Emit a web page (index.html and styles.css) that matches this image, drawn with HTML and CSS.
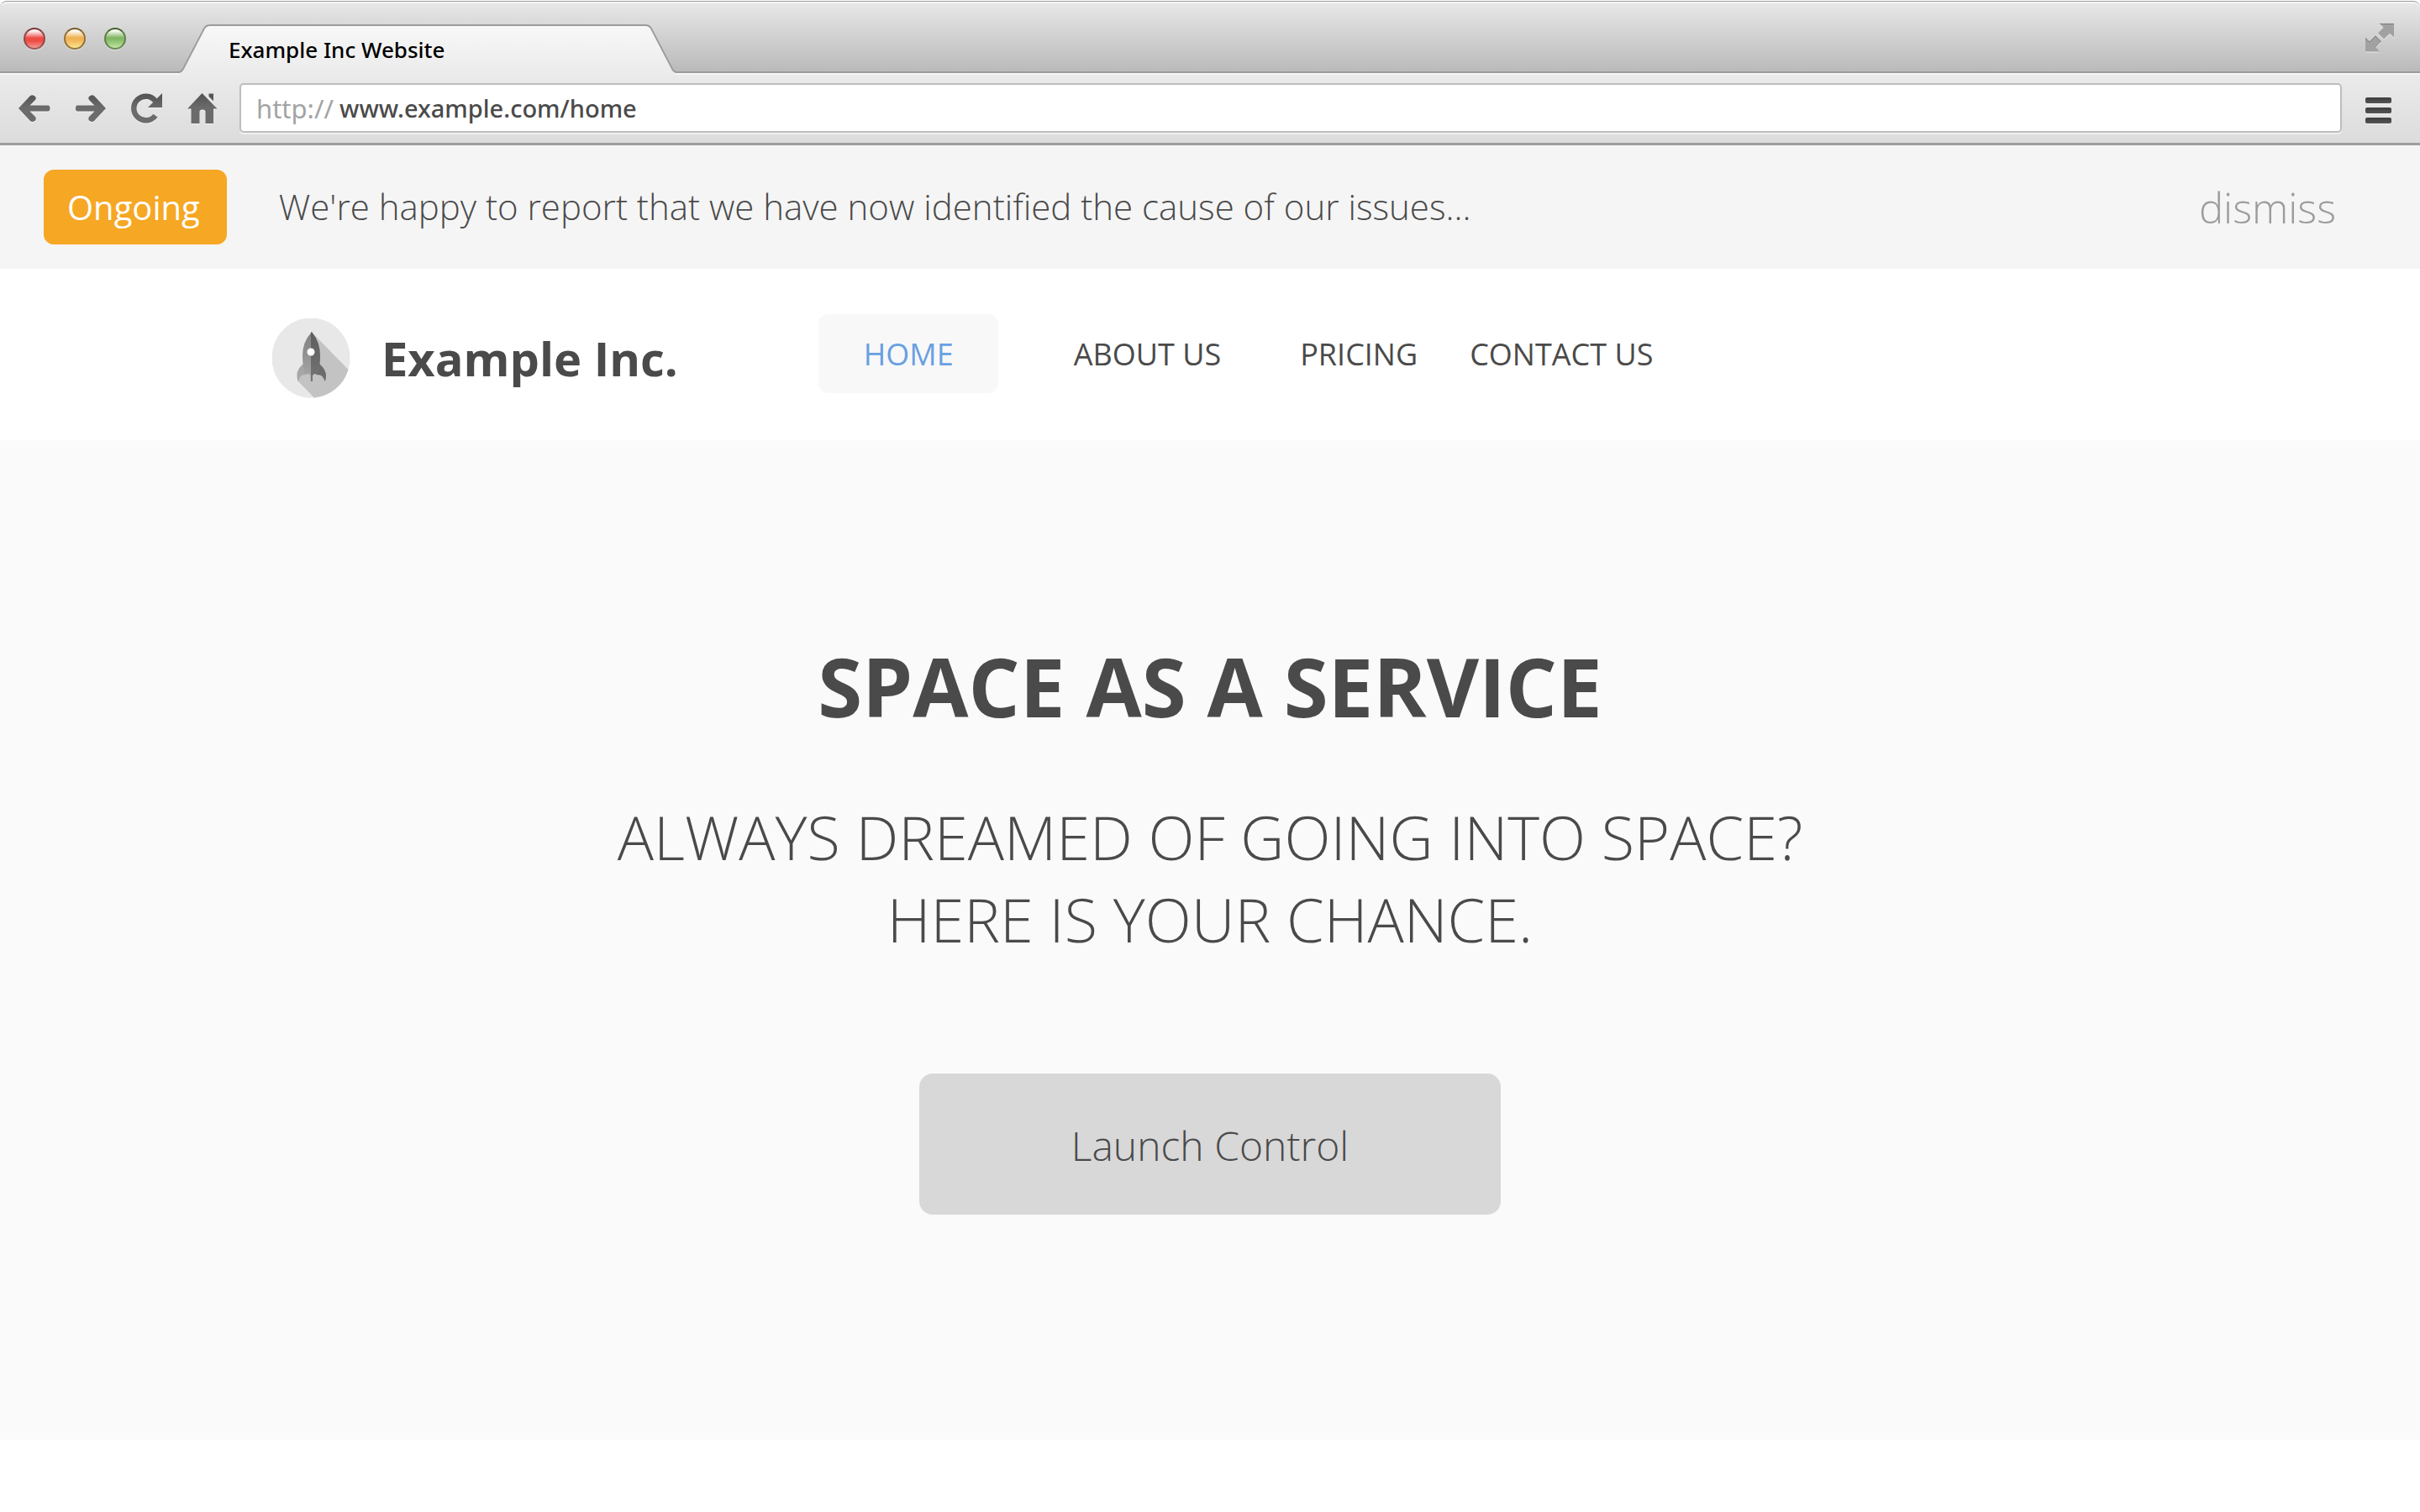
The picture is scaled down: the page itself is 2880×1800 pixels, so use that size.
FILE: index.html
```html
<!DOCTYPE html>
<html lang="en">
<head>
<meta charset="utf-8">
<meta name="viewport" content="width=device-width, initial-scale=1">
<title>Example Inc Website</title>
<link rel="stylesheet" href="styles.css">
</head>
<body>
<svg class="defs" width="0" height="0" aria-hidden="true">
  <defs>
    <linearGradient id="ink" x1="0" y1="0" x2="0" y2="37" gradientUnits="userSpaceOnUse">
      <stop offset="0" stop-color="#505050"/><stop offset=".5" stop-color="#6b6b6b"/><stop offset="1" stop-color="#6b6b6b"/>
    </linearGradient>
    <linearGradient id="tabfill" x1="0" y1="0" x2="0" y2="1">
      <stop offset="0" stop-color="#f8f8f8"/><stop offset="1" stop-color="#ebebeb"/>
    </linearGradient>
    <linearGradient id="hull-left" x1="0" y1="0" x2="0" y2="1">
      <stop offset="0" stop-color="#808080"/><stop offset="1" stop-color="#a8a8a8"/>
    </linearGradient>
    <linearGradient id="hull-right" x1="0" y1="0" x2="0" y2="1">
      <stop offset="0" stop-color="#5c5c5c"/><stop offset="1" stop-color="#757575"/>
    </linearGradient>
  </defs>
</svg>

<div class="browser">
  <div class="titlebar">
    <div class="lights">
      <button class="light light-close" type="button" aria-label="Close"></button>
      <button class="light light-minimise" type="button" aria-label="Minimise"></button>
      <button class="light light-zoom" type="button" aria-label="Zoom"></button>
    </div>
    <div class="tab">
      <svg class="tab-shape" viewBox="0 0 594 60" aria-hidden="true">
        <path d="M2 60V57Q5 57 6 53L31 5Q33 1 38 1H556Q561 1 563 5L588 53Q589 57 592 57V60Z" fill="url(#tabfill)"/>
        <path d="M0 57Q4 57 6 53L31 5Q33 1 38 1H556Q561 1 563 5L588 53Q590 57 594 57" fill="none" stroke="#9b9b9b" stroke-width="1.8"/>
      </svg>
      <span class="tab-title">Example Inc Website</span>
    </div>
    <button class="icon-button fullscreen" type="button" aria-label="Full screen">
      <svg width="34" height="34" viewBox="0 0 34 34" aria-hidden="true">
        <path d="M17 0H34V16.500L29 12L22 18.500L15 11.500L21.500 5Z M17 33.500H0V17L5 21.500L12 14.500L19 21.500L12.500 28.500Z" fill="#a1a1a1"/>
        <path d="M17 .5H34M0 17.500L5 22L12 15L18.500 21.500" fill="none" stroke="#7c7c7c"/>
      </svg>
    </button>
  </div>
  <div class="toolbar">
    <div class="controls">
      <button class="icon-button" type="button" aria-label="Back">
        <svg width="37" height="37" viewBox="0 0 37 37" aria-hidden="true"><path fill="url(#ink)" d="M0 19L14 4Q17 2 20 5Q21.500 7 20 9L13.500 15.500H35Q37.500 15.500 37.500 19T35 22.500H13.500L20 29Q21.500 31.500 20 33.500Q17 36 14 34Z"/></svg>
      </button>
      <button class="icon-button" type="button" aria-label="Forward">
        <svg width="37" height="37" viewBox="0 0 37 37" aria-hidden="true"><path fill="url(#ink)" d="M37 19L23 4Q20 2 17 5Q15.500 7 17 9L23.500 15.500H3Q1 15.500 1 19T3 22.500H23.500L17 29Q15.500 31.500 17 33.500Q20 36 23 34Z"/></svg>
      </button>
      <button class="icon-button" type="button" aria-label="Reload">
        <svg width="37" height="37" viewBox="0 0 37 37" aria-hidden="true"><path fill="none" stroke="url(#ink)" stroke-width="6.500" d="M29 27.600A14.300 14.300 0 1 1 28.700 10"/><path fill="url(#ink)" d="M37 1V18H20Z"/></svg>
      </button>
      <button class="icon-button" type="button" aria-label="Home">
        <svg width="37" height="37" viewBox="0 0 37 37" aria-hidden="true"><path fill="url(#ink)" d="M0 19.500L17.500 1L35.500 19.500H31V37H21.500V23Q21.500 20.500 18 20.500T14.500 23V37H4.500V19.500ZM25.500 1.500H31V10.500L25.500 5Z"/></svg>
      </button>
    </div>
    <div class="address">
      <label class="scheme" for="url">http://</label>
      <input class="url" id="url" type="text" value="www.example.com/home">
    </div>
    <button class="icon-button menu" type="button" aria-label="Menu">
      <span class="bar"></span><span class="bar"></span><span class="bar"></span>
    </button>
  </div>
</div>

<section class="notice">
  <span class="badge">Ongoing</span>
  <p class="notice-text">We're happy to report that we have now identified the cause of our issues...</p>
  <button class="dismiss" type="button">dismiss</button>
</section>

<header class="site-header">
  <a class="brand" href="#">
    <svg class="logo" width="93" height="95" viewBox="0 0 93 95" aria-hidden="true">
      <ellipse cx="46" cy="47" rx="46.500" ry="47.500" fill="#e8e8e8"/>
      <path d="M47.500 17L90.500 61A46.500 47.500 0 0 1 50 94.500L30 74L40 55Z" fill="#c3c3c3"/>
      <path d="M37 54Q29 61 29.500 68Q29.500 73 31 75Q32 69 36 67.500L40 67Z" fill="#a6a6a6"/>
      <path d="M56 54Q64 61 64 68Q64 73 62.500 75Q61 69 57 67.500L52 67Z" fill="#6c6c6c"/>
      <path d="M47 16Q35.500 29 36 45Q36 58 39.500 67Q43 64.500 45.500 68V75H47Z" fill="url(#hull-left)"/>
      <path d="M47 16Q57.500 29 57 45Q57 58 54 67Q50.500 64.500 48 68V75H46V17Z" fill="url(#hull-right)"/>
      <circle cx="46" cy="40" r="4.500" fill="#fff"/>
    </svg>
    <span class="brand-name">Example Inc.</span>
  </a>
  <nav class="site-nav">
    <a class="nav-link nav-current" href="#" aria-current="page">HOME</a>
    <a class="nav-link nav-about" href="#">ABOUT US</a>
    <a class="nav-link nav-pricing" href="#">PRICING</a>
    <a class="nav-link nav-contact" href="#">CONTACT US</a>
  </nav>
</header>

<main class="hero">
  <h1 class="hero-title">SPACE AS A SERVICE</h1>
  <p class="hero-text">ALWAYS DREAMED OF GOING INTO SPACE?<br>HERE IS YOUR CHANCE.</p>
  <button class="launch" type="button">Launch Control</button>
</main>
</body>
</html>
```
FILE: styles.css
```css
* { box-sizing: border-box; }

body {
  margin: 0;
  background: #fff;
  color: #4a4a4a;
  font-family: "Open Sans", "Noto Sans", sans-serif;
}

button,
input {
  margin: 0;
  padding: 0;
  border: 0;
  background: none;
  color: inherit;
  font: inherit;
}

button { cursor: pointer; }

a {
  color: inherit;
  text-decoration: none;
}

.defs { position: absolute; }

/* Browser frame */
.browser {
  padding-top: 1px;
  font-family: "Noto Sans", sans-serif;
  font-weight: 500;
}

.titlebar {
  display: flex;
  align-items: flex-end;
  height: 86px;
  padding: 0 31px 0 28px;
  border-top: 1px solid #9b9d9b;
  border-bottom: 2px solid #9b9b9b;
  border-radius: 8px 8px 0 0;
  background: linear-gradient(#e8e8e8, #bababa);
  box-shadow: inset 0 2px #f4f6f4;
}

.lights {
  display: flex;
  align-self: flex-start;
  gap: 22px;
  padding-top: 31px;
}

.light {
  width: 26px;
  height: 26px;
  border: 2px solid;
  border-radius: 50%;
  box-shadow: 0 1px 1px rgba(255, 255, 255, .5);
}

.light-close {
  border-color: #7a3534 #8f4a48 #9a5a58;
  background: linear-gradient(#fff 5%, #f3a5a2 28%, #ee4b43 46%, #ee4b43 62%, #f39a94);
}

.light-minimise {
  border-color: #7d5a25 #94713a #94793f;
  background: linear-gradient(#fff 5%, #f6d5a0 28%, #efb04e 46%, #f1ba5c 62%, #fde58c);
}

.light-zoom {
  border-color: #46602f #5f8049 #6c8c56;
  background: linear-gradient(#fff 5%, #b9d6a6 28%, #7db560 46%, #8dc070 62%, #c4e5a3);
}

.tab {
  position: relative;
  z-index: 1;
  display: flex;
  align-items: center;
  width: 594px;
  height: 60px;
  margin: 0 0 -4px 62px;
  padding: 0 60px;
}

.tab-shape {
  position: absolute;
  inset: 0;
}

.tab-title {
  position: relative;
  color: #000;
  font-size: 26px;
  line-height: 36px;
  white-space: nowrap;
}

.icon-button {
  display: block;
  flex: none;
}

.icon-button svg {
  display: block;
  overflow: visible;
  filter: drop-shadow(0 1px 0 rgba(255, 255, 255, .6));
}

.fullscreen {
  align-self: flex-start;
  margin-left: auto;
  padding-top: 26px;
}

.toolbar {
  display: flex;
  align-items: center;
  padding: 12px 34px 12px 22px;
  border-bottom: 3px solid #9d9d9d;
  background: linear-gradient(#ebebeb, #dcdcdc);
  box-shadow: inset 0 2px #f6f6f6;
}

.controls {
  display: flex;
  gap: 30px;
}

.address {
  display: flex;
  flex: 1;
  align-items: center;
  height: 59px;
  margin: 0 28px 0 25px;
  padding: 0 18px;
  border: 2px solid #bdbdbd;
  border-radius: 5px;
  background: #fff;
  box-shadow: 0 2px #f0f0f0;
  font-size: 29px;
  line-height: 40px;
}

.scheme {
  flex: none;
  width: 99px;
  color: #a3a3a3;
  font-size: 31px;
  font-weight: 400;
}

.url {
  flex: 1;
  min-width: 0;
  height: 40px;
}

.menu {
  display: grid;
  gap: 5px;
  width: 31px;
  padding-top: 5px;
}

.bar {
  height: 7px;
  border-radius: 2px;
  background: linear-gradient(#3c3c3c, #565656);
  box-shadow: 0 1px #f4f4f4;
}

/* Status notice */
.notice {
  display: flex;
  align-items: center;
  padding: 29px 100px 29px 52px;
  background: #f5f5f5;
}

.badge {
  padding: 17px 32px 17px 28px;
  border-radius: 12px;
  background: #f6a724;
  color: #fff;
  font-size: 40px;
  line-height: 55px;
}

.notice-text {
  flex: 1;
  margin: 0 0 0 62px;
  padding-bottom: 2px;
  font-size: 42px;
  font-weight: 300;
  line-height: 58px;
}

.dismiss {
  color: #9b9b9b;
  font-size: 49px;
  font-weight: 300;
  line-height: 66px;
}

/* Site header */
.site-header {
  display: flex;
  align-items: flex-start;
  padding: 54px 100px 46px 11.25%;
}

.brand {
  display: flex;
  align-items: center;
  gap: 37px;
  height: 104px;
}

.brand-name {
  font-size: 56px;
  font-weight: 700;
  line-height: 76px;
  white-space: nowrap;
}

.site-nav {
  display: flex;
  margin-left: 167px;
  font-size: 36px;
  line-height: 92px;
  white-space: nowrap;
}

.nav-link { padding-top: 2px; }

.nav-current {
  padding-right: 53px;
  padding-left: 54px;
  border-radius: 12px;
  background: #f8f8f8;
  color: #68a0e2;
}

.nav-about { margin-left: 90px; }
.nav-pricing { margin-left: 94px; }
.nav-contact { margin-left: 62px; }

/* Hero */
.hero {
  display: flex;
  flex-direction: column;
  align-items: center;
  padding: 227px 40px 268px;
  background: #fafafa;
  text-align: center;
}

.hero-title {
  margin: 0;
  font-size: 96px;
  font-weight: 700;
  line-height: 132px;
}

.hero-text {
  margin: 64px 0 135px;
  font-size: 72px;
  font-weight: 300;
  line-height: 98px;
}

.launch {
  width: 692px;
  max-width: 100%;
  padding: 53px 40px 49px;
  border-radius: 16px;
  background: #d8d8d8;
  font-size: 48px;
  font-weight: 300;
  line-height: 66px;
}
```
